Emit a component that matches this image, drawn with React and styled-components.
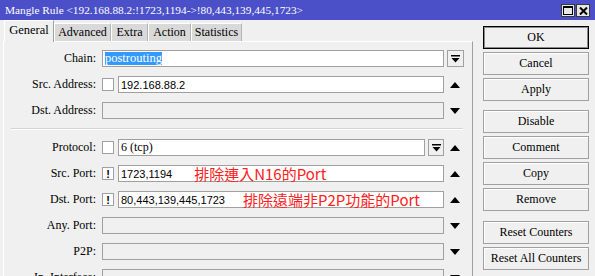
import React from "react";
import styled, { createGlobalStyle } from "styled-components";

const SERIF = `"Liberation Serif", "Times New Roman", serif`;
const SANS = `"Liberation Sans", Arial, sans-serif`;

const GlobalStyle = createGlobalStyle`
  html, body {
    margin: 0;
    padding: 0;
    background: #f0f0f0;
    overflow: hidden;
  }
`;

export default function App() {
  return (
    <Window>
      <GlobalStyle />
      <TitleBar>
        <Title>Mangle Rule &lt;192.168.88.2:!1723,1194-&gt;!80,443,139,445,1723&gt;</Title>
        <WinButtons>
          <WinButton>
            <svg width="10" height="9" viewBox="0 0 10 9">
              <rect x="0.5" y="0.5" width="9" height="8" fill="none" stroke="#000" />
              <rect x="0" y="0" width="10" height="2" fill="#000" />
            </svg>
          </WinButton>
          <WinButton>
            <svg width="9" height="8" viewBox="0 0 9 8">
              <path d="M1 0.5 L8 7.5 M8 0.5 L1 7.5" stroke="#000" strokeWidth="2" />
            </svg>
          </WinButton>
        </WinButtons>
      </TitleBar>

      <Main>
        <LeftPane>
          <TabBar>
            <Tab $active>General</Tab>
            <Tab $w={57}>Advanced</Tab>
            <Tab $w={37}>Extra</Tab>
            <Tab $w={43}>Action</Tab>
            <Tab $w={51}>Statistics</Tab>
          </TabBar>

          <Panel>
            <Row>
              <Label>Chain:</Label>
              <Field $w={342}>
                <Input>
                  <Selected>postrouting</Selected>
                </Input>
              </Field>
              <DropButton $w={17}>
                <DropIcon />
              </DropButton>
            </Row>

            <Row>
              <Label>Src. Address:</Label>
              <Field $w={342}>
                <Check />
                <Input>192.168.88.2</Input>
              </Field>
              <ArrowSlot>
                <Arrow $up />
              </ArrowSlot>
            </Row>

            <Row>
              <Label>Dst. Address:</Label>
              <Field $w={342}>
                <Input $disabled />
              </Field>
              <ArrowSlot>
                <Arrow />
              </ArrowSlot>
            </Row>

            <Separator />

            <Row>
              <Label>Protocol:</Label>
              <Field $w={342}>
                <Check />
                <Input $serif>6 (tcp)</Input>
                <DropButton $w={16}>
                  <DropIcon />
                </DropButton>
              </Field>
              <ArrowSlot>
                <Arrow $up />
              </ArrowSlot>
            </Row>

            <Row>
              <Label>Src. Port:</Label>
              <Field $w={342}>
                <Check>!</Check>
                <Input>
                  1723,1194
                  <Note $gap={22}>排除連入N16的Port</Note>
                </Input>
              </Field>
              <ArrowSlot>
                <Arrow $up />
              </ArrowSlot>
            </Row>

            <Row>
              <Label>Dst. Port:</Label>
              <Field $w={342}>
                <Check>!</Check>
                <Input>
                  80,443,139,445,1723
                  <Note $gap={18}>排除遠端非P2P功能的Port</Note>
                </Input>
              </Field>
              <ArrowSlot>
                <Arrow $up />
              </ArrowSlot>
            </Row>

            <Row>
              <Label>Any. Port:</Label>
              <Field $w={342}>
                <Input $disabled />
              </Field>
              <ArrowSlot>
                <Arrow />
              </ArrowSlot>
            </Row>

            <Row>
              <Label>P2P:</Label>
              <Field $w={342}>
                <Input $disabled />
              </Field>
              <ArrowSlot>
                <Arrow />
              </ArrowSlot>
            </Row>

            <Row>
              <Label>In. Interface:</Label>
              <Field $w={342}>
                <Input $disabled />
              </Field>
              <ArrowSlot>
                <Arrow />
              </ArrowSlot>
            </Row>
          </Panel>
        </LeftPane>

        <ButtonColumn>
          <Button $default>OK</Button>
          <Button>Cancel</Button>
          <Button>Apply</Button>
          <Button $space={9}>Disable</Button>
          <Button>Comment</Button>
          <Button>Copy</Button>
          <Button>Remove</Button>
          <Button $space={10}>Reset Counters</Button>
          <Button>Reset All Counters</Button>
        </ButtonColumn>
      </Main>
    </Window>
  );
}

function DropIcon() {
  return (
    <svg width="9" height="8" viewBox="0 0 9 8">
      <rect x="0" y="0" width="9" height="1.5" fill="#000" />
      <path d="M0.5 3 L8.5 3 L4.5 7.5 Z" fill="#000" />
    </svg>
  );
}

function Arrow({ $up }) {
  return (
    <svg width="10" height="6" viewBox="0 0 10 6">
      {$up ? (
        <path d="M0 6 L10 6 L5 0 Z" fill="#000" />
      ) : (
        <path d="M0 0 L10 0 L5 6 Z" fill="#000" />
      )}
    </svg>
  );
}

const Window = styled.div`
  width: 595px;
  height: 276px;
  display: flex;
  flex-direction: column;
  overflow: hidden;
  background: #f0f0f0;
`;

const TitleBar = styled.div`
  height: 20px;
  flex: none;
  background: #4b50c9;
  display: flex;
  align-items: center;
  justify-content: space-between;
  padding: 0 5px;
`;

const Title = styled.div`
  font-family: ${SERIF};
  font-size: 11.3px;
  color: #ffffff;
  white-space: nowrap;
`;

const WinButtons = styled.div`
  display: flex;
  gap: 1px;
  margin-top: 1px;
`;

const WinButton = styled.div`
  width: 14px;
  height: 13px;
  box-sizing: border-box;
  border: 1px solid #3a3a3a;
  background: #e6e6e6;
  display: flex;
  align-items: center;
  justify-content: center;
`;

const Main = styled.div`
  flex: 1;
  display: flex;
  min-height: 0;
`;

const LeftPane = styled.div`
  width: 473px;
  padding-left: 3px;
  box-sizing: border-box;
  display: flex;
  flex-direction: column;
`;

const TabBar = styled.div`
  height: 23px;
  display: flex;
  align-items: flex-end;
  padding-left: 1px;
  position: relative;
  z-index: 1;
`;

const Tab = styled.div`
  box-sizing: border-box;
  width: ${(p) => (p.$active ? "50px" : `${p.$w}px`)};
  height: ${(p) => (p.$active ? "22px" : "18px")};
  margin-bottom: ${(p) => (p.$active ? "-1px" : "0")};
  background: ${(p) => (p.$active ? "#f0f0f0" : "#d9d9d9")};
  border-top: 1px solid #ffffff;
  border-left: 1px solid #ffffff;
  border-right: 1px solid ${(p) => (p.$active ? "#a0a0a0" : "#b4b4b4")};
  font-family: ${SERIF};
  font-size: ${(p) => (p.$active ? "12.5px" : "12px")};
  color: #000;
  display: flex;
  align-items: center;
  justify-content: center;
  padding-bottom: ${(p) => (p.$active ? "3px" : "0")};
  white-space: nowrap;
`;

const Panel = styled.div`
  flex: 1;
  box-sizing: border-box;
  border-left: 1px solid #ffffff;
  border-top: 1px solid #ffffff;
  border-right: 1px solid #a0a0a0;
  padding-top: 8px;
  display: flex;
  flex-direction: column;
  gap: 9px;
`;

const Row = styled.div`
  height: 17px;
  flex: none;
  display: flex;
  align-items: center;
`;

const Label = styled.div`
  width: 92px;
  margin-right: 6px;
  text-align: right;
  font-family: ${SERIF};
  font-size: 12px;
  color: #000;
  white-space: nowrap;
`;

const Field = styled.div`
  width: ${(p) => p.$w}px;
  height: 17px;
  display: flex;
  align-items: center;
  gap: 4px;
`;

const Input = styled.div`
  flex: 1;
  height: 17px;
  box-sizing: border-box;
  border: 1px solid #a0a0a0;
  background: ${(p) => (p.$disabled ? "#f0f0f0" : "#ffffff")};
  font-family: ${(p) => (p.$serif ? SERIF : SANS)};
  font-size: ${(p) => (p.$serif ? "12px" : "11px")};
  color: #000;
  padding-left: 2px;
  display: flex;
  align-items: center;
  white-space: nowrap;
`;

const Selected = styled.span`
  background: #3399ff;
  color: #ffffff;
  font-family: ${SERIF};
  font-size: 12.5px;
  line-height: 13px;
`;

const Note = styled.span`
  margin-left: ${(p) => p.$gap}px;
  font-family: "Noto Sans CJK TC", "Noto Sans", sans-serif;
  font-size: 15px;
  line-height: 15px;
  color: #ff2020;
`;

const Check = styled.div`
  flex: none;
  width: 12px;
  height: 13px;
  box-sizing: border-box;
  border: 1px solid #a0a0a0;
  background: #ffffff;
  font-family: ${SANS};
  font-size: 11px;
  font-weight: 700;
  color: #000;
  display: flex;
  align-items: center;
  justify-content: center;
`;

const DropButton = styled.div`
  flex: none;
  width: ${(p) => p.$w}px;
  height: 17px;
  box-sizing: border-box;
  margin-left: ${(p) => (p.$w === 17 ? "3px" : "-1px")};
  border: 1px solid #a0a0a0;
  background: #f0f0f0;
  display: flex;
  align-items: center;
  justify-content: center;
`;

const ArrowSlot = styled.div`
  width: 22px;
  display: flex;
  align-items: center;
  justify-content: center;
`;

const Separator = styled.div`
  height: 1px;
  margin: 0 9px 0 7px;
  background: #d4d4d4;
  border-bottom: 1px solid #ffffff;
`;

const ButtonColumn = styled.div`
  width: 106px;
  margin-left: 10px;
  padding-top: 6px;
  display: flex;
  flex-direction: column;
  gap: 3px;
`;

const Button = styled.div`
  height: 23px;
  flex: none;
  box-sizing: border-box;
  margin-top: ${(p) => (p.$space ? `${p.$space - 3}px` : "0")};
  border: 1px solid ${(p) => (p.$default ? "#000000" : "#a0a0a0")};
  box-shadow: ${(p) => (p.$default ? "inset 0 0 0 1px #8a8a8a" : "inset 1px 1px 0 #ffffff")};
  background: #f0f0f0;
  font-family: ${SERIF};
  font-size: 12px;
  color: #000;
  display: flex;
  align-items: center;
  justify-content: center;
  white-space: nowrap;
`;
